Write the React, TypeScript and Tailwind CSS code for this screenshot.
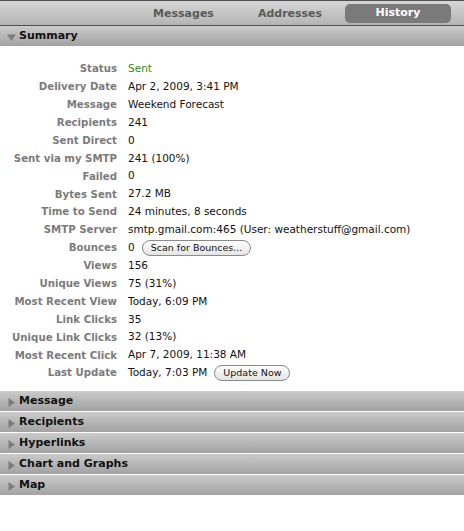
const FONT = { fontFamily: '"DejaVu Sans", "Lucida Grande", sans-serif' };

interface Row {
  label: string;
  value: string;
  green?: boolean;
  button?: string;
}

const ROWS: Row[] = [
  { label: "Status", value: "Sent", green: true },
  { label: "Delivery Date", value: "Apr 2, 2009, 3:41 PM" },
  { label: "Message", value: "Weekend Forecast" },
  { label: "Recipients", value: "241" },
  { label: "Sent Direct", value: "0" },
  { label: "Sent via my SMTP", value: "241 (100%)" },
  { label: "Failed", value: "0" },
  { label: "Bytes Sent", value: "27.2 MB" },
  { label: "Time to Send", value: "24 minutes, 8 seconds" },
  { label: "SMTP Server", value: "smtp.gmail.com:465 (User: weatherstuff@gmail.com)" },
  { label: "Bounces", value: "0", button: "Scan for Bounces..." },
  { label: "Views", value: "156" },
  { label: "Unique Views", value: "75 (31%)" },
  { label: "Most Recent View", value: "Today, 6:09 PM" },
  { label: "Link Clicks", value: "35" },
  { label: "Unique Link Clicks", value: "32 (13%)" },
  { label: "Most Recent Click", value: "Apr 7, 2009, 11:38 AM" },
  { label: "Last Update", value: "Today, 7:03 PM", button: "Update Now" },
];

const SECTIONS = ["Message", "Recipients", "Hyperlinks", "Chart and Graphs", "Map"];

const Triangle = ({ open }: { open?: boolean }) => (
  <svg width="9" height="9" viewBox="0 0 9 9" className="mt-[2px]">
    {open ? <path d="M0 1.5 L9 1.5 L4.5 8 Z" fill="#7c7c7c" /> : <path d="M1.5 0 L8 4.5 L1.5 9 Z" fill="#7c7c7c" />}
  </svg>
);

const SectionHeader = ({ title, open }: { title: string; open?: boolean }) => (
  <div className="flex items-center gap-[3px] h-[20px] pl-[7px] bg-gradient-to-b from-[#cbcbcb] to-[#a2a2a2]">
    <Triangle open={open} />
    <span className="text-[11px] font-bold text-[#111]">{title}</span>
  </div>
);

export default function App() {
  return (
    <div className="w-[464px] h-[531px] bg-white overflow-hidden" style={FONT}>
      {/* Tab bar */}
      <div className="h-[26px] border-t border-b border-[#4f4f4f] bg-gradient-to-b from-[#d6d6d6] to-[#b4b4b4] flex items-center">
        <div className="flex items-center ml-[132px] h-full pt-[1px]">
          <div className="w-[103px] pt-[2px] text-center text-[11px] font-bold text-[#5a5a5a]">Messages</div>
          <div className="w-[110px] pt-[2px] text-center text-[11px] font-bold text-[#5a5a5a]">Addresses</div>
          <div className="w-[106px] h-[19px] rounded-[5px] bg-[#7a7a7a] flex items-center justify-center text-[11px] font-bold text-white">
            History
          </div>
        </div>
      </div>

      <SectionHeader title="Summary" open />

      <div className="pt-[14px] pb-[9px]">
        {ROWS.map((r) => (
          <div key={r.label} className="flex items-center h-[17.9px]">
            <div className="w-[117px] text-right text-[10.2px] font-bold text-[#7b7b7b] whitespace-nowrap">{r.label}</div>
            <div className={`ml-[11px] text-[10.5px] whitespace-nowrap ${r.green ? "text-[#2f8a1c]" : "text-[#111]"}`}>
              {r.value}
            </div>
            {r.button && (
              <div className="ml-[7px] h-[16px] px-[8px] rounded-full border border-[#8a8a8a] bg-gradient-to-b from-[#ffffff] to-[#e4e4e4] flex items-center text-[9.5px] text-[#111]">
                {r.button}
              </div>
            )}
          </div>
        ))}
      </div>

      <div className="flex flex-col gap-[1px]">
        {SECTIONS.map((s) => (
          <SectionHeader key={s} title={s} />
        ))}
      </div>
    </div>
  );
}
